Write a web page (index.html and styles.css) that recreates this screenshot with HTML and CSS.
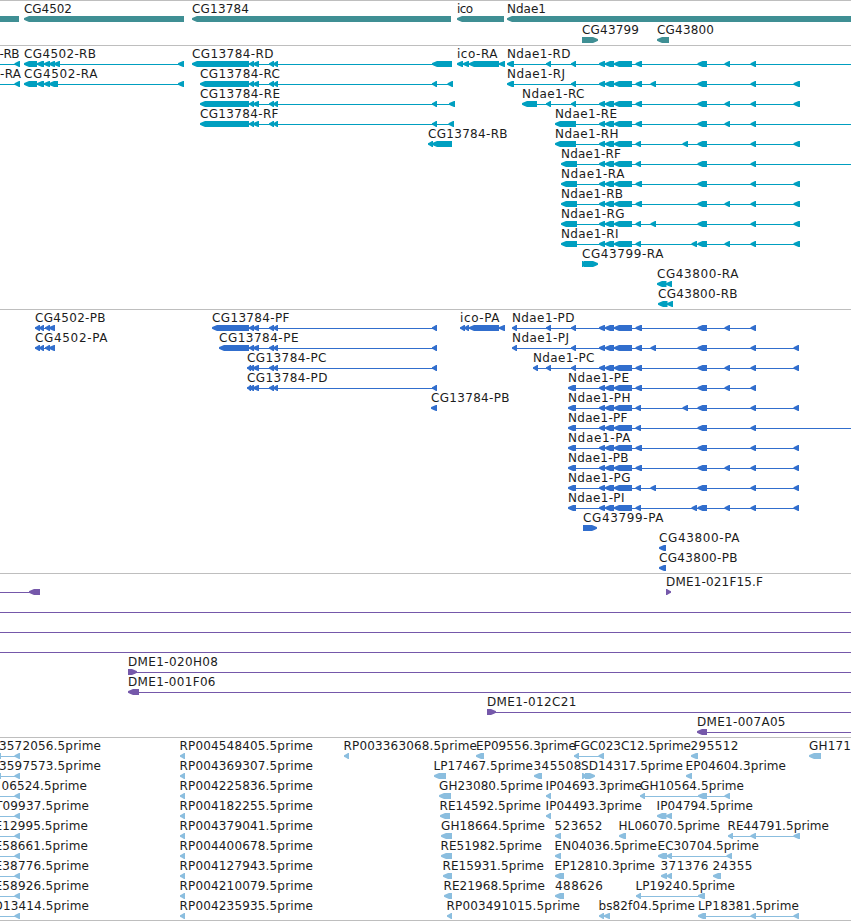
FILE: index.html
```html
<!DOCTYPE html>
<html lang="en">
<head>
  <meta charset="UTF-8">
  <meta name="viewport" content="width=device-width, initial-scale=1.0">
  <title>Genome tracks</title>
  <link rel="stylesheet" href="styles.css">
</head>
<body>
  <main class="browser">
    <section class="track genes"><svg id="genes"></svg></section>
    <section class="track transcripts"><svg id="transcripts"></svg></section>
    <section class="track proteins"><svg id="proteins"></svg></section>
    <section class="track clones"><svg id="clones"></svg></section>
    <section class="track ests"><svg id="ests"></svg></section>
  </main>
  <script src="tracks.js"></script>
</body>
</html>
```

FILE: styles.css
```css
body {
  margin: 0;
  background: #fff;
  font-family: "DejaVu Sans", sans-serif;
  font-size: 12px;
  overflow: hidden;
}
.browser {
  display: flex;
  flex-direction: column;
  width: 851px;
  height: 920px;
  border-bottom: 1px solid #bebebe;
}
.track {
  box-sizing: border-box;
  border-top: 1px solid #bebebe;
  overflow: hidden;
}
.track svg {
  display: block;
  width: 100%;
  height: 100%;
}
.track text {
  fill: #1c1c1c;
}
.line {
  shape-rendering: crispEdges;
}
.genes {
  height: 45px;
  fill: #3f8f94;
}
.transcripts {
  height: 264px;
  fill: #009fc0;
}
.proteins {
  height: 264px;
  fill: #316ecd;
}
.clones {
  height: 164px;
  fill: #7558aa;
}
.ests {
  height: 183px;
  fill: #8bbedf;
}
```

FILE: tracks.js
```javascript
const SVG = "http://www.w3.org/2000/svg";

// parts of the Ndae1 gene shared by its transcripts
const body = [[599, 605], [605, 614], [614, 632]];
const long = [635.5, 642];
const short = [635.5, 641];
const e574 = [571, 576];
const e653 = [650.5, 656];
const e685 = [682.5, 688];
const e702 = [697.5, 707];
const e727 = [724.5, 730];
const e753 = [750.5, 756];
const e797 = [793.5, 800];
const p797 = [793.5, 799];
const off = [900, 906];
const introns = [[249, 254], [253, 259], [269, 274], [273, 278]];

// row, label, label start, label end, parts, strand
const genes = [
  [0, "", 0, 0, [[-30, 19]]],
  [0, "CG4502", 24, 72, [[24, 184]]],
  [0, "CG13784", 192, 249, [[192, 451]]],
  [0, "ico", 457, 473, [[457, 504]]],
  [0, "Ndae1", 507, 546, [[507, 900]]],
  [1, "CG43799", 582, 639, [[582, 598]], "+"],
  [1, "CG43800", 657, 714, [[657, 669]]]
];

const transcripts = [
  [0, "-RB", -0.5, 19.5, [[-20, -10], [14.5, 20]]],
  [1, "-RA", 0, 21, [[-20, -10], [14.5, 20]]],
  [0, "CG4502-RB", 24, 96, [[24, 37], [37, 44], [44, 50], [49, 55], [54, 60], [178, 184]]],
  [1, "CG4502-RA", 24, 97.5, [[24, 37], [37, 44], [44, 50], [49, 58], [178, 184]]],
  [0, "CG13784-RD", 192, 273.5, [[192, 249], ...introns, [432, 452]]],
  [1, "CG13784-RC", 200, 280, [[200, 249], ...introns, [432, 437], [447.5, 453]]],
  [2, "CG13784-RE", 200, 280, [[200, 249], ...introns, [432, 437], [449, 455]]],
  [3, "CG13784-RF", 200, 278.5, [[200, 249], ...introns, [432, 437], [448.5, 454]]],
  [4, "CG13784-RB", 428, 507.5, [[428, 433], [432, 452]]],
  [0, "ico-RA", 457, 497.5, [[457, 463], [463, 469], [469, 499], [499, 505]]],
  [0, "Ndae1-RD", 507, 570.5, [[507, 514], [546, 551], e574, ...body, long, e702, e727, e753, off]],
  [1, "Ndae1-RJ", 507, 565, [[507, 514], e574, ...body, long, e653, e702, e753, e797]],
  [2, "Ndae1-RC", 522, 584.5, [[522, 537], [546, 551], e574, ...body, long, e702, e727, e753, e797]],
  [3, "Ndae1-RE", 555, 617, [[555, 576], ...body, long, e702, e727, e753, off]],
  [4, "Ndae1-RH", 555, 618.5, [[555, 576], ...body, short, e685, e702, e753, e797]],
  [5, "Ndae1-RF", 561, 621, [[561, 577], ...body, short, e702, e753, off]],
  [6, "Ndae1-RA", 561, 624.5, [[561, 577], ...body, long, e702, e753, e797]],
  [7, "Ndae1-RB", 561, 623, [[561, 577], ...body, long, e702, e727, e753, e797]],
  [8, "Ndae1-RG", 561, 624.5, [[561, 577], ...body, short, e653, e702, e753, e797]],
  [9, "Ndae1-RI", 561, 618.5, [[561, 577], ...body, short, [691.5, 697], e702, e727, e753, e797]],
  [10, "CG43799-RA", 582, 663.5, [[582, 587], [584, 598]], "+"],
  [11, "CG43800-RA", 657, 738.5, [[657, 666.5], [666, 672]]],
  [12, "CG43800-RB", 658, 737.5, [[658, 667.5], [667, 673]]]
];

const proteins = [
  [0, "CG4502-PB", 35, 105.5, [[35, 40], [39, 44], [45, 50], [49, 55]]],
  [1, "CG4502-PA", 35, 107.5, [[35, 40], [39, 44], [45, 50], [49, 55]]],
  [0, "CG13784-PF", 212, 289.5, [[212, 249], ...introns, [432, 437]]],
  [1, "CG13784-PE", 219, 298.5, [[219, 249], ...introns, [432, 437]]],
  [2, "CG13784-PC", 247, 326.5, [[247, 251], ...introns, [432, 437]]],
  [3, "CG13784-PD", 247, 327.5, [[247, 251], ...introns, [432, 437]]],
  [4, "CG13784-PB", 431, 509.5, [[431, 437]]],
  [0, "ico-PA", 460, 499.5, [[460, 465], [464, 469], [469, 499], [499, 505]]],
  [0, "Ndae1-PD", 512, 574.5, [[512, 517], [546, 551], e574, ...body, long, e702, e727, e753]],
  [1, "Ndae1-PJ", 512, 569, [[512, 517], e574, ...body, long, e653, e702, e753, p797]],
  [2, "Ndae1-PC", 533, 594.5, [[533, 538], [546, 551], e574, ...body, long, e702, e727, e753, p797]],
  [3, "Ndae1-PE", 568, 629, [[568, 576], ...body, long, e702, e727, e753]],
  [4, "Ndae1-PH", 568, 630.5, [[568, 576], ...body, short, e685, e702, e753, p797]],
  [5, "Ndae1-PF", 568, 627.5, [[568, 576], ...body, short, e702, e753, off]],
  [6, "Ndae1-PA", 568, 630.5, [[568, 576], ...body, long, e702, e753, p797]],
  [7, "Ndae1-PB", 568, 628.5, [[568, 576], ...body, long, e702, e727, e753, p797]],
  [8, "Ndae1-PG", 568, 630.5, [[568, 576], ...body, short, e653, e702, e753, p797]],
  [9, "Ndae1-PI", 568, 624.5, [[568, 576], ...body, short, [691.5, 697], e702, e727, e753, p797]],
  [10, "CG43799-PA", 583, 663.5, [[583, 597]], "+"],
  [11, "CG43800-PA", 659, 739.5, [[659, 666]]],
  [12, "CG43800-PB", 659, 737.5, [[659, 666]]]
];

const clones = [
  [0, "", 0, 0, [[-20, -10], [29, 40]]],
  [0, "DME1-021F15.F", 666, 763, [[666, 671]], "+"],
  [1, "", 0, 0, [[-20, -10], off]],
  [2, "", 0, 0, [[-20, -10], off]],
  [3, "", 0, 0, [[-20, -10], off]],
  [4, "DME1-020H08", 128, 218, [[128, 137], off], "+"],
  [5, "DME1-001F06", 128, 215.5, [[128, 139], off]],
  [6, "DME1-012C21", 487, 576.5, [[487, 496], off], "+"],
  [7, "DME1-007A05", 697, 785.5, [[697, 707], off]]
];

const ests = [
  [0, "3572056.5prime", -1, 101, [[-5, 1], [14.5, 20]]],
  [1, "3597573.5prime", -1, 101, [[-5, 1], [14.5, 20]]],
  [2, "06524.5prime", 1.5, 87, [[-20, -10], [14.5, 20]]],
  [3, "T09937.5prime", -5, 89, [[-20, -10], [14.5, 20]]],
  [4, "E12995.5prime", -5.5, 88, [[-20, -10], [14.5, 20]]],
  [5, "E58661.5prime", -5.5, 88, [[-20, -10], [14.5, 20]]],
  [6, "E38776.5prime", -5.5, 89, [[-20, -10], [14.5, 20]]],
  [7, "E58926.5prime", -5.5, 89, [[-20, -10], [14.5, 20]]],
  [8, "D13414.5prime", -6.5, 89, [[-20, -10], [14.5, 20]]],
  [0, "RP004548405.5prime", 179.5, 313, [[180, 185]]],
  [1, "RP004369307.5prime", 179.5, 313, [[180, 185]]],
  [2, "RP004225836.5prime", 179.5, 313, [[180, 185]]],
  [3, "RP004182255.5prime", 179.5, 313, [[180, 185]]],
  [4, "RP004379041.5prime", 179.5, 313, [[180, 185]]],
  [5, "RP004400678.5prime", 179.5, 313, [[180, 185]]],
  [6, "RP004127943.5prime", 179.5, 313, [[180, 185]]],
  [7, "RP004210079.5prime", 179.5, 313, [[180, 185]]],
  [8, "RP004235935.5prime", 179.5, 313, [[180, 185]]],
  [0, "RP003363068.5prime", 343.5, 477, [[344, 349]]],
  [0, "EP09556.3prime", 476, 576, [[476, 484]]],
  [0, "FGC023C12.5prime", 573.5, 691, [[574, 579], [598.5, 604]]],
  [0, "295512", 690.5, 738.5, [[691, 698]]],
  [0, "GH171", 809, 851, [[809, 821]]],
  [1, "LP17467.5prime", 433.5, 533, [[434, 446]]],
  [1, "345508", 533.5, 581.5, [[534, 542]]],
  [1, "SD14317.5prime", 581, 683, [[582, 587], [585, 595]], "+"],
  [1, "EP04604.3prime", 685.5, 786, [[686, 692]]],
  [2, "GH23080.5prime", 439, 543, [[439, 451]]],
  [2, "IP04693.3prime", 545.5, 642, [[546, 551]]],
  [2, "GH10564.5prime", 640, 744, [[640, 645], [698, 707], [724.5, 730]]],
  [3, "RE14592.5prime", 439.5, 541, [[440, 450]]],
  [3, "IP04493.3prime", 545.5, 642, [[546, 551]]],
  [3, "IP04794.5prime", 656.5, 753, [[657, 666.5], [666, 672]]],
  [4, "GH18664.5prime", 441, 545, [[441, 452]]],
  [4, "523652", 554.5, 602.5, [[555, 561]]],
  [4, "HL06070.5prime", 618.5, 720, [[619, 626]]],
  [4, "RE44791.5prime", 727.5, 829, [[728, 733], [750.5, 756], [793.5, 800]]],
  [5, "RE51982.5prime", 440.5, 542, [[441, 452]]],
  [5, "EN04036.5prime", 554.5, 657, [[555, 561]]],
  [5, "EC30704.5prime", 657.5, 759, [[658, 667], [666.5, 672], [726.5, 732]]],
  [6, "RE15931.5prime", 442.5, 544, [[443, 452]]],
  [6, "EP12810.3prime", 554.5, 655, [[555, 564]]],
  [6, "371376", 660.5, 708.5, [[661, 667], [666.5, 672]]],
  [6, "24355", 712.5, 752.5, [[713, 721]]],
  [7, "RE21968.5prime", 443.5, 545, [[444, 452]]],
  [7, "488626", 555, 603, [[555, 564]]],
  [7, "LP19240.5prime", 635.5, 735, [[636, 641], [698, 705]]],
  [8, "RP003491015.5prime", 446.5, 580, [[447, 452]]],
  [8, "bs82f04.5prime", 598.5, 695, [[599, 604], [604, 610]]],
  [8, "LP18381.5prime", 698, 799, [[698, 706], [750.5, 756], [793.5, 799]]]
];

function add(svg, tag, attrs, text) {
  const el = document.createElementNS(SVG, tag);
  for (const key in attrs) {
    el.setAttribute(key, attrs[key]);
  }
  if (text) el.textContent = text;
  svg.appendChild(el);
}

// bar with a blunt pointed end, left by default
function arrow(a, b, y, strand) {
  const tip = Math.min(b - a - 1, 5);
  const right = strand === "+";
  const nose = right ? b : a;
  const back = right ? a : b;
  const dir = right ? -1 : 1;
  return [
    [back, y],
    [nose + dir * tip, y],
    [nose + dir * 2, y + 1.2],
    [nose, y + 2.2],
    [nose, y + 3.8],
    [nose + dir * 2, y + 4.8],
    [nose + dir * tip, y + 6],
    [back, y + 6]
  ].join(" ");
}

function draw(id, features, pitch) {
  const svg = document.getElementById(id);
  for (const [row, name, x, end, parts, strand] of features) {
    const y = row * pitch;
    const from = parts[0][0];
    const to = parts[parts.length - 1][1];
    if (parts.length > 1) {
      add(svg, "rect", { class: "line", x: from + 2, y: y + 18, width: to - from - 3, height: 1 });
    }
    for (const [a, b] of parts) {
      add(svg, "polygon", { points: arrow(a, b, y + 15, strand) });
    }
    if (name) {
      add(svg, "text", { x: x, y: y + 12, textLength: end - x }, name);
    }
  }
}

draw("genes", genes, 21);
draw("transcripts", transcripts, 20);
draw("proteins", proteins, 20);
draw("clones", clones, 20);
draw("ests", ests, 20);
```
